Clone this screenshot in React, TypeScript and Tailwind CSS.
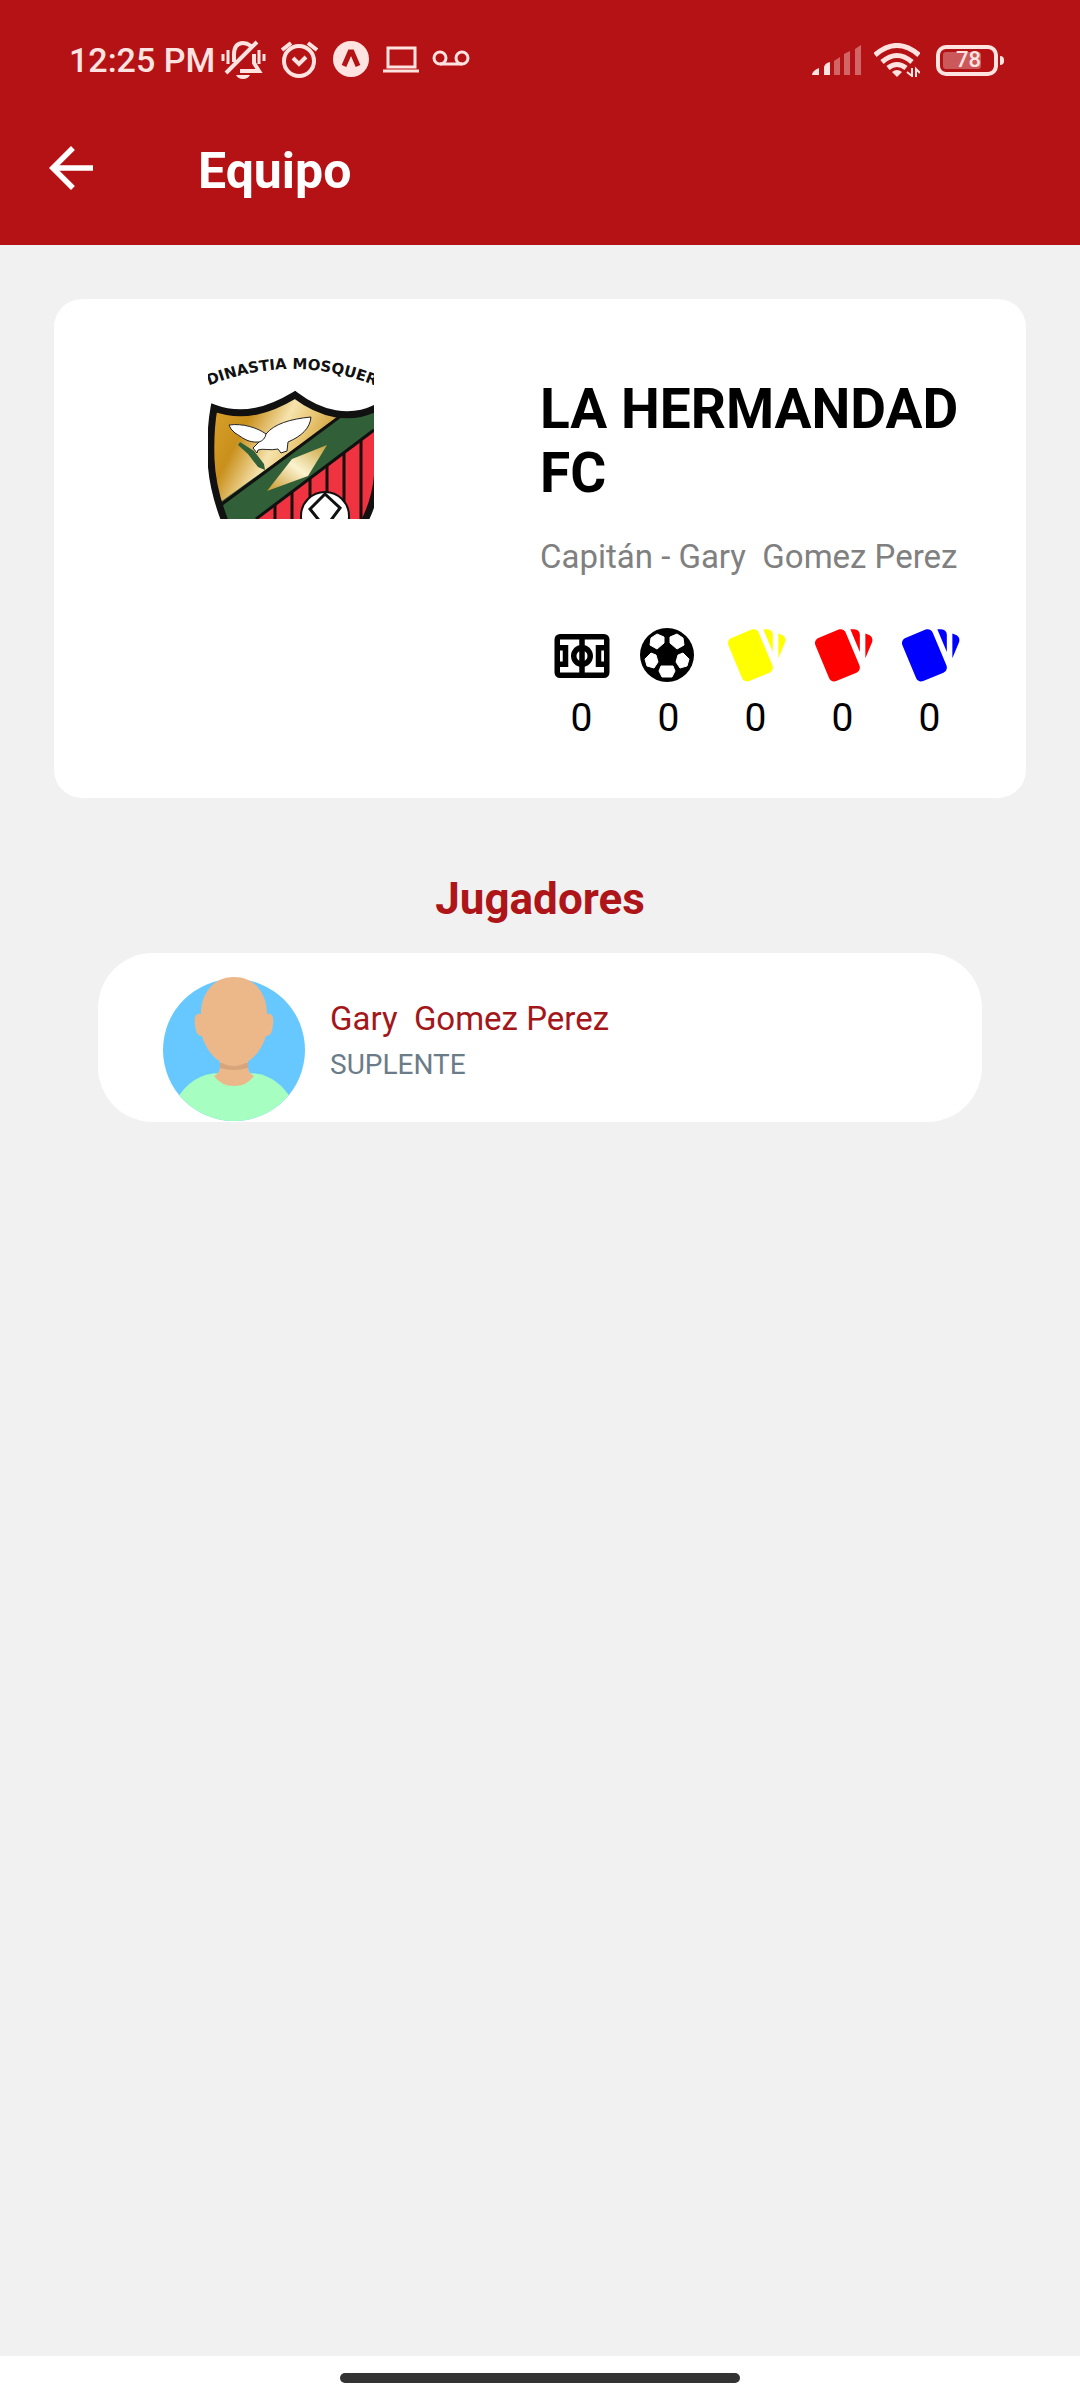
import React from 'react';

const stats = [
  { id: 'matches', label: 'Partidos', icon: <FieldIcon />, value: 0 },
  { id: 'goals', label: 'Goles', icon: <BallIcon />, value: 0 },
  { id: 'yellow', label: 'Tarjetas amarillas', icon: <CardsIcon className="text-[#ffff00]" />, value: 0 },
  { id: 'red', label: 'Tarjetas rojas', icon: <CardsIcon className="text-[#ff0000]" />, value: 0 },
  { id: 'blue', label: 'Tarjetas azules', icon: <CardsIcon className="text-[#0000ff]" />, value: 0 },
];

const players = [{ name: 'Gary  Gomez Perez', role: 'SUPLENTE' }];

function FieldIcon() {
  return (
    <svg viewBox="0 0 24 24" className="size-[66px]" fill="currentColor">
      <path d="M4,4A2,2 0 0,0 2,6V18A2,2 0 0,0 4,20H20A2,2 0 0,0 22,18V6A2,2 0 0,0 20,4H4M4,6H11V8.13C9.24,8.59 8,10.18 8,12C8,13.82 9.24,15.41 11,15.87V18H4V16H7V8H4V6M13,6H20V8H17V16H20V18H13V15.87C14.76,15.41 16,13.82 16,12C16,10.18 14.76,8.59 13,8.13V6M4,10H5V14H4V10M19,10H20V14H19V10M13,10.27C13.62,10.63 14,11.29 14,12C14,12.71 13.62,13.37 13,13.73V10.27M11,10.27V13.73C10.38,13.37 10,12.71 10,12C10,11.29 10.38,10.63 11,10.27Z" />
    </svg>
  );
}

function BallIcon() {
  return (
    <svg viewBox="0 0 66 66" className="size-[66px]">
      <circle cx="31" cy="32" r="27" fill="#000" />
      <g fill="#fff" stroke="#fff" strokeWidth="1" strokeLinejoin="round">
        <path d="M15 15 21 11 28 14V20L21 26 14 22Z" />
        <path d="M47 15 41 11 34 14V20L41 26 48 22Z" />
        <path d="M9 36 15 30 20 32 22 39 18 45 11 43Z" />
        <path d="M53 36 47 30 42 32 40 39 44 45 51 43Z" />
        <path d="M25 43H37L39 48 36 54H26L23 48Z" />
      </g>
    </svg>
  );
}

function CardsIcon({ className }: { className: string }) {
  return (
    <svg viewBox="0 0 24 24" className={`size-[66px] ${className}`} fill="currentColor">
      <path d="M21.47,4.35L20.13,3.79V12.82L22.56,6.96C22.97,5.94 22.5,4.77 21.47,4.35M1.97,8.05L6.93,20C7.24,20.77 7.97,21.24 8.74,21.26C9,21.26 9.27,21.21 9.53,21.1L16.9,18.05C17.65,17.74 18.11,17 18.13,16.26C18.14,16 18.09,15.71 18,15.45L13,3.5C12.71,2.73 11.97,2.26 11.19,2.25C10.93,2.25 10.67,2.31 10.42,2.4L3.06,5.45C2.04,5.87 1.55,7.04 1.97,8.05M18.12,4.25A2,2 0 0,0 16.12,2.25H14.67L18.12,10.59" />
    </svg>
  );
}

// Team crest, cropped at the edges of its square
function Crest() {
  return (
    <svg viewBox="0 0 166 165" className="h-[165px] w-[166px]" role="img" aria-label="Escudo del equipo">
      <defs>
        <linearGradient id="gold" x1="0" y1="0.2" x2="1" y2="0.6">
          <stop offset="0" stopColor="#d9a02c" />
          <stop offset="0.22" stopColor="#c9901c" />
          <stop offset="0.42" stopColor="#f6e3ad" />
          <stop offset="0.55" stopColor="#e8c673" />
          <stop offset="0.75" stopColor="#c9952a" />
          <stop offset="1" stopColor="#e8cf85" />
        </linearGradient>
        <linearGradient id="diamond" x1="0" y1="1" x2="1" y2="0">
          <stop offset="0" stopColor="#c9962a" />
          <stop offset="0.5" stopColor="#fbf3cf" />
          <stop offset="1" stopColor="#c9a23a" />
        </linearGradient>
        <clipPath id="shield">
          <path d="M6 54C35 65 62 56 87 41C112 60 142 68 170 53V110Q170 142 155 170H18Q4 135 3 105Q2 76 6 54Z" />
        </clipPath>
        <path id="arc" d="M-5 34Q84 -4 173 34" />
      </defs>
      <text fontFamily="DejaVu Sans, sans-serif" fontWeight="700" fontSize="15" fill="#111">
        <textPath href="#arc" startOffset="50%" textAnchor="middle">DINASTIA MOSQUER</textPath>
      </text>
      <g clipPath="url(#shield)">
        <rect y="35" width="166" height="130" fill="url(#gold)" />
        <path d="M166 74 48 165H166Z" fill="#ef3340" />
        <g stroke="#1a0d0d" strokeWidth="3">
          <path d="M67 150V165M84 138V165M102 125V165M119 112V165M136 98V165M153 85V165" />
        </g>
        <path d="M134 61 0 157V165H48L166 76V50Z" fill="#315f37" />
        <path d="M134 61 10 153M166 76 48 165" stroke="#111" strokeWidth="3" />
        <path d="M119 91 84 105 59 137 100 122Z" fill="url(#diamond)" />
        <path d="M32 88 46 97 56 110 57 116 50 113 40 100 30 91Z" fill="#315f37" />
        <path d="M21 71C35 69 50 74 58 80C66 70 82 65 103 63C102 74 94 82 80 88L79 97 73 99 70 95C62 97 55 94 50 96L49 99 45 94 51 88C39 89 34 83 27 79Q22 75 21 71Z" fill="#fff" stroke="#222" strokeWidth="1" />
        <path d="M58 80Q57 86 51 88" fill="none" stroke="#222" strokeWidth="1" />
        <circle cx="117" cy="162" r="24" fill="#fff" stroke="#111" strokeWidth="2" />
        <path d="M117 140 102 155 114 170H120L132 154Z" fill="#fff" stroke="#111" strokeWidth="3" />
      </g>
      <path d="M6 54C35 65 62 56 87 41C112 60 142 68 170 53V110Q170 142 155 170H18Q4 135 3 105Q2 76 6 54Z" fill="none" stroke="#111" strokeWidth="7" />
    </svg>
  );
}

function Avatar() {
  return (
    <svg viewBox="0 0 142 144" className="h-[144px] w-[142px] shrink-0" aria-hidden="true">
      <defs>
        <clipPath id="avatar-circle">
          <circle cx="71" cy="73" r="71" />
        </clipPath>
      </defs>
      <g clipPath="url(#avatar-circle)">
        <rect width="142" height="144" fill="#66c8ff" />
        <path d="M12 144V125Q28 96 57 96H85Q114 96 130 125V144Z" fill="#a6ffc0" />
        <path d="M51 99Q57 96 57 90V80H85V90Q85 96 91 99Q84 109 71 109T51 99Z" fill="#ecb88a" />
        <path d="M57 86H85V91Q71 95 57 91Z" fill="#d8a47c" />
      </g>
      <path d="M71 0C93 0 104 18 104 37C110 36 111 41 110 48C109 55 108 59 103 59C98 76 85 89 71 89S44 76 39 59C34 59 33 55 32 48C31 41 32 36 38 37C38 18 49 0 71 0Z" fill="#ecb88a" />
    </svg>
  );
}

function StatusBar() {
  return (
    <div className="flex h-[120px] items-center justify-between pr-[76px] pl-[69px] text-[#ffe3e0]">
      <div className="flex items-center">
        <span className="text-[34px] font-medium">12:25 PM</span>
        <svg viewBox="0 0 260 60" className="ml-1.5 h-[60px] w-[260px]" fill="none" stroke="currentColor" strokeWidth="4">
          {/* Muted bell */}
          <path d="M5 43 36 12M13 32V25Q13 13 22 13 26 13 30 16M33 24V33L38 41H19" />
          <path d="M2 24V31M7 20V34M38 20V34M43 24V31" strokeWidth="3" />
          <path d="M15 45H29Q27 49 22 49T15 45Z" fill="currentColor" stroke="none" />
          {/* Alarm */}
          <circle cx="78" cy="31" r="15" />
          <path d="M72 28 78 34 85 27M61 20 70 13M96 20 87 13" />
          {/* App badge */}
          <circle cx="130" cy="29" r="18" fill="currentColor" stroke="none" />
          <path d="M123 36 129 22H131L137 36" stroke="#b51215" strokeWidth="5" />
          {/* Laptop */}
          <path d="M167 18H194V37H167ZM162 41H198" strokeWidth="3" />
          {/* Voicemail */}
          <circle cx="219" cy="28" r="6" strokeWidth="3" />
          <circle cx="241" cy="28" r="6" strokeWidth="3" />
          <path d="M219 34H241" strokeWidth="3" />
        </svg>
      </div>
      <div className="flex items-center gap-3">
        <svg viewBox="0 0 50 34" className="h-[34px] w-[50px]" fill="currentColor">
          <path d="M0 32Q0 28 7 25V32ZM12 24Q13 20 18 19V32H12Z" />
          <path d="M22 18 28 14V32H22ZM32 11 38 8V32H32ZM43 6 49 2V32H43Z" opacity="0.4" />
        </svg>
        <svg viewBox="0 0 46 34" className="h-[34px] w-[46px]" fill="none" stroke="currentColor" strokeWidth="5">
          <path d="M1 12Q23 -7 45 12M8 19Q23 6 38 19M14 25Q23 18 32 25" />
          <path d="M18 29Q23 25 28 29L23 34Z" fill="currentColor" stroke="none" />
          <path d="M38 25V33L33 29M42 34V26L46 30" strokeWidth="2" />
        </svg>
        <div className="ml-1 flex items-center gap-[2px]">
          <div className="flex h-[31px] w-[62px] items-center rounded-[10px] border-4 border-current pl-[3px]">
            <div className="flex h-[17px] w-[38px] items-center justify-end rounded-[3px] bg-white/30">
              <span className="text-[22px] leading-none font-medium">78</span>
            </div>
          </div>
          <div className="h-[9px] w-[4px] rounded-r-sm bg-current" />
        </div>
      </div>
    </div>
  );
}

function Header() {
  return (
    <header className="h-[245px] bg-[#b51215] text-white">
      <StatusBar />
      <div className="flex h-[96px] items-center pl-[38px]">
        <button type="button" aria-label="Volver" className="mr-[94px]">
          <svg viewBox="0 0 24 24" className="size-[66px]" fill="currentColor">
            <path d="M20 11H7.83l5.59-5.59L12 4l-8 8 8 8 1.41-1.41L7.83 13H20v-2z" />
          </svg>
        </button>
        <h1 className="pt-1.5 text-[50px] leading-[60px] font-bold">Equipo</h1>
      </div>
    </header>
  );
}

export default function App() {
  return (
    <div className="flex min-h-screen flex-col bg-[#f1f1f1] font-[Roboto,sans-serif]">
      <Header />

      <main className="flex-1">
        <section className="mx-[54px] mt-[54px] flex rounded-[28px] bg-white pt-[55px] pb-[57px]">
          <div className="flex w-1/2 justify-center pr-3">
            <Crest />
          </div>
          <div className="w-1/2 pt-[23px]">
            <h2 className="pr-[54px] text-[55px] leading-[64px] font-bold text-black">LA HERMANDAD FC</h2>
            <p className="mt-[32px] text-[33px] leading-[40px] whitespace-pre text-[#808080]">
              Capitán - Gary  Gomez Perez
            </p>
            <ul className="mt-[46px] -ml-[2px] flex">
              {stats.map(stat => (
                <li key={stat.id} title={stat.label} className="flex w-[87px] flex-col items-center text-black">
                  {stat.icon}
                  <span className="mt-[6px] text-[39px] leading-[46px]">{stat.value}</span>
                </li>
              ))}
            </ul>
          </div>
        </section>

        <h2 className="mt-[75px] text-center text-[44px] leading-[52px] font-bold text-[#ae1519]">Jugadores</h2>

        <ul className="mx-[98px] mt-[28px]">
          {players.map(player => (
            <li key={player.name} className="flex rounded-[55px] bg-white pt-[24px] pb-px pl-[65px]">
              <Avatar />
              <div className="ml-[25px] pt-[22px]">
                <p className="text-[33px] leading-[40px] whitespace-pre text-[#a3171b]">{player.name}</p>
                <p className="mt-[8px] text-[28px] leading-[36px] text-[#6b7c89]">{player.role}</p>
              </div>
            </li>
          ))}
        </ul>
      </main>

      <footer className="flex h-[44px] items-center justify-center bg-white">
        <div className="h-[10px] w-[400px] rounded-full bg-[#333333]" />
      </footer>
    </div>
  );
}
